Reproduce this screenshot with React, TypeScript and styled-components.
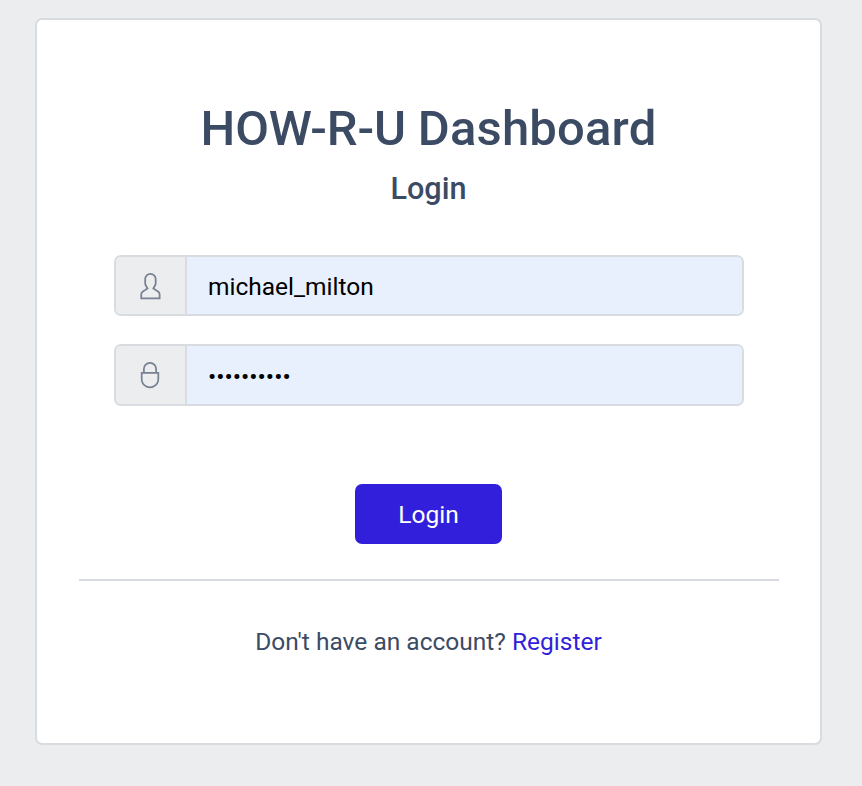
import React from "react";
import styled, { createGlobalStyle } from "styled-components";

const GlobalStyle = createGlobalStyle`
  *, *::before, *::after { box-sizing: border-box; }
  body { margin: 0; background: #ebedef; color: #3c4b64; font-family: Roboto, sans-serif; font-size: 24.5px; line-height: 36px; }
`;

const Page = styled.main`
  min-height: 786px;
  padding: 18px 40px 0 35px;
`;

const Card = styled.section`
  width: 787px;
  height: 727px;
  padding: 79px 42px 0;
  background: #fff;
  border: 2px solid #d8dbe0;
  border-radius: 7px;
  display: flex;
  flex-direction: column;
`;

const Title = styled.h1`
  margin: 0;
  font-size: 49px;
  line-height: 59px;
  font-weight: 500;
  text-align: center;
`;

const TitleWord = styled.span<{ $tracking: number }>`
  letter-spacing: ${({ $tracking }) => $tracking}px;
`;

const Subtitle = styled.h2`
  margin: 12px 0 0;
  font-size: 30.6px;
  line-height: 37px;
  font-weight: 500;
  text-align: center;
`;

const Form = styled.form`
  margin: 48px 35px 0;
  display: flex;
  flex-direction: column;
  align-items: center;
`;

const Field = styled.label<{ $height: number }>`
  width: 630px;
  height: ${({ $height }) => $height}px;
  margin-bottom: 28px;
  display: flex;
  border: 2px solid #d8dbe0;
  border-radius: 7px;
  overflow: hidden;
`;

const Addon = styled.span`
  width: 71px;
  flex: none;
  display: flex;
  align-items: flex-start;
  justify-content: center;
  padding-top: 14.5px;
  background: #ebedef;
  border-right: 2px solid #d8dbe0;
  color: #768192;
`;

const Input = styled.input`
  flex: 1;
  min-width: 0;
  border: 0;
  outline: 0;
  padding: 2px 21px 0 21.5px;
  background: #e8f0fe;
  color: #000;
  font: 24.5px Roboto, sans-serif;
`;

const Button = styled.button`
  width: 147px;
  height: 60px;
  margin-top: 50px;
  border: 0;
  border-radius: 7px;
  background: #321fdb;
  color: #fff;
  font: 24.5px Roboto, sans-serif;
`;

const Divider = styled.hr`
  width: 700px;
  height: 2px;
  margin: 35px 0 0;
  border: 0;
  background: #d8dbe0;
`;

const Footer = styled.p`
  margin: 43px 0 0;
  text-align: center;
`;

const Link = styled.a`
  color: #321fdb;
  text-decoration: none;
`;

const UserIcon = () => (
  <svg width="28" height="28" viewBox="0 0 512 512" fill="currentColor">
    <path d="M411.6 343.656l-72.823-47.334 27.455-50.334A80.23 80.23 0 0 0 376 207.681V128a112 112 0 0 0-224 0v79.681a80.236 80.236 0 0 0 9.768 38.308l27.455 50.333L116.4 343.656A79.725 79.725 0 0 0 80 410.732V496H448V410.732A79.727 79.727 0 0 0 411.6 343.656ZM416 464H112V410.732a47.836 47.836 0 0 1 21.841-40.246l97.66-63.479-41.64-76.341A48.146 48.146 0 0 1 184 207.681V128a80 80 0 0 1 160 0v79.681a48.146 48.146 0 0 1-5.861 22.985L296.5 307.007l97.662 63.479A47.836 47.836 0 0 1 416 410.732Z" />
  </svg>
);

const LockIcon = () => (
  <svg width="28" height="28" viewBox="0 0 512 512" fill="currentColor">
    <path d="M384 200V144a128 128 0 0 0-256 0v56H88v128c0 92.635 75.364 168 168 168s168-75.365 168-168V200ZM160 144a96 96 0 0 1 192 0v56H160ZM392 328c0 74.99-61.01 136-136 136s-136-61.01-136-136V232H392Z" />
  </svg>
);

export default function App() {
  return (
    <>
      <GlobalStyle />
      <Page>
        <Card>
          <Title>
            <TitleWord $tracking={-0.17}>HOW-R-U </TitleWord>
            <TitleWord $tracking={0.17}>Dashboard</TitleWord>
          </Title>
          <Subtitle>Login</Subtitle>
          <Form onSubmit={(e) => e.preventDefault()}>
            <Field $height={61}>
              <Addon><UserIcon /></Addon>
              <Input type="text" aria-label="Username" defaultValue="michael_milton" />
            </Field>
            <Field $height={62}>
              <Addon><LockIcon /></Addon>
              <Input type="password" aria-label="Password" defaultValue="abcdefghij" />
            </Field>
            <Button type="submit">Login</Button>
          </Form>
          <Divider />
          <Footer>Don't have an account? <Link href="#">Register</Link></Footer>
        </Card>
      </Page>
    </>
  );
}
